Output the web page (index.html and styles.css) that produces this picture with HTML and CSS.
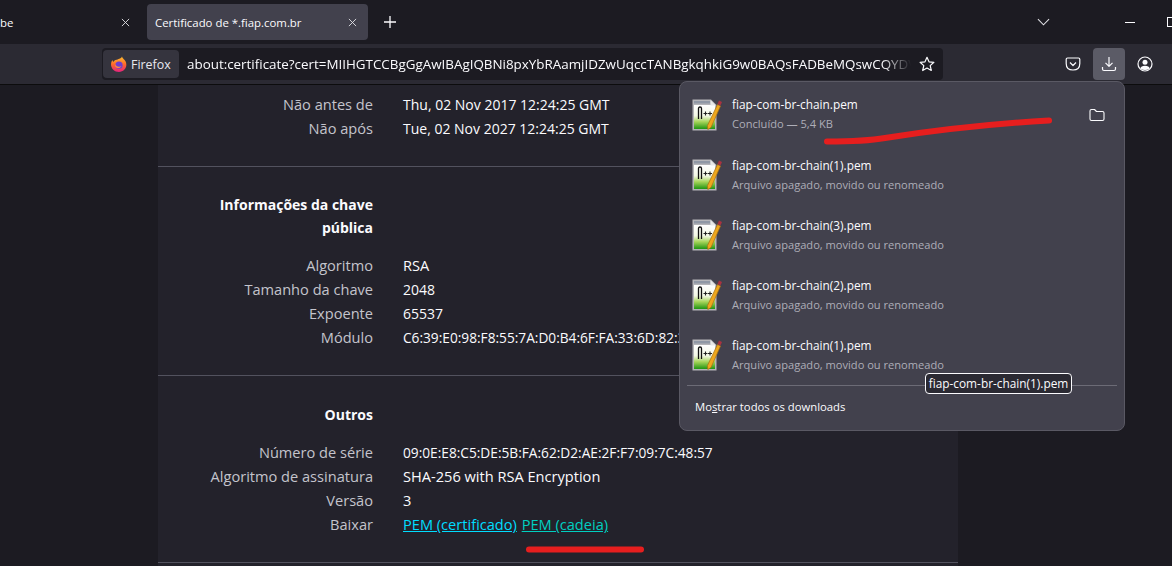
FILE: index.html
```html
<!DOCTYPE html>
<html lang="pt-BR">
<head>
<meta charset="utf-8">
<title>Certificado de *.fiap.com.br</title>
<link rel="stylesheet" href="styles.css">
</head>
<body>
<svg width="0" height="0" class="defs">
  <defs>
    <linearGradient id="paper" x1="0" y1="0" x2="0" y2="1">
      <stop offset="0" stop-color="#ffffff"/>
      <stop offset=".45" stop-color="#f3f8e6"/>
      <stop offset=".7" stop-color="#a6d45a"/>
      <stop offset="1" stop-color="#1f9412"/>
    </linearGradient>
    <linearGradient id="fxfire" x1="0" y1="0" x2="0" y2="1">
      <stop offset="0" stop-color="#ffc02e"/>
      <stop offset=".5" stop-color="#ff6a2b"/>
      <stop offset="1" stop-color="#e3217f"/>
    </linearGradient>
  </defs>
  <symbol id="notepad" viewBox="0 0 30 32">
    <path d="M.5 .5H19L24.500 6V31.500H.5Z" fill="#b4b4b8"/>
    <path d="M2 6H23V30H2Z" fill="url(#paper)"/>
    <path d="M2 2H18V4.500H2Z" fill="#8f97a5"/>
    <path d="M18.500 1L24 6.500H18.500Z" fill="#e8e8e8"/>
    <path d="M6.500 20V9.500Q6.500 8 8 8Q9.500 8 9.500 9.500V20" fill="none" stroke="#111" stroke-width="1.300"/>
    <path d="M11.500 14.500H15.500M13.500 12.500V16.500M16 14.500H20M18 12.500V16.500" stroke="#222" stroke-width="1.100"/>
    <path d="M15.500 26.500L25.500 5.500L28.500 7L19 28.500L15.800 30.500Z" fill="#eea71e" stroke="#a86f10" stroke-width=".7"/>
    <path d="M25.500 5L27 1.500L30 3L28.500 6.500Z" fill="#a83240"/>
  </symbol>
</svg>
<header class="tabbar">
  <div class="tab tab-off"><span class="tab-label">be</span><svg class="ico-x" viewBox="0 0 10 10"><path d="M1 1L9 9M9 1L1 9"/></svg></div>
  <div class="tab tab-on"><span class="tab-label">Certificado de *.fiap.com.br</span><svg class="ico-x" viewBox="0 0 10 10"><path d="M1 1L9 9M9 1L1 9"/></svg></div>
  <svg class="ico-plus" viewBox="0 0 12 12"><path d="M6 0V12M0 6H12"/></svg>
  <div class="tab-spacer"></div>
  <svg class="ico-chev" viewBox="0 0 14 8"><path d="M1 1L7 7L13 1"/></svg>
  <div class="win-min"></div>
  <div class="win-max"></div>
</header>
<nav class="toolbar">
  <div class="urlbar">
    <div class="chip">
      <svg class="ico-fx" viewBox="0 0 16 16">
        <path d="M11 .5C11.500 3 14 3 15 6.500C16.500 11.500 13 16 8 16C3.500 16 0 12.500 0 8.500C0 6.500 .8 4.800 1.500 4C1.500 5 2 5.500 2.500 6C3 4.500 4.500 3.500 6 3.800C8 2.500 10.500 2.500 11 .5Z" fill="url(#fxfire)"/>
        <circle cx="8" cy="9.200" r="3.600" fill="#6e3fd0"/>
        <path d="M4.300 8C5 10.500 8 11.500 10.500 10C9.500 12.500 5 13 4 10Z" fill="#ff8a3c"/>
      </svg>
      <span>Firefox</span>
    </div>
    <div class="url">about:certificate?cert=MIIHGTCCBgGgAwIBAgIQBNi8pxYbRAamjIDZwUqccTANBgkqhkiG9w0BAQsFADBeMQswCQYDV</div>
    <svg class="ico-star" viewBox="0 0 16 16"><path d="M8 1.300L10 5.800L14.900 6.300L11.200 9.600L12.300 14.500L8 12L3.700 14.500L4.800 9.600L1.100 6.300L6 5.800Z"/></svg>
  </div>
  <div class="tools">
    <button class="tool"><svg viewBox="0 0 16 16"><path d="M2.500 2H13.500Q14.800 2 14.800 3.300V7.500Q14.800 14 8 14Q1.200 14 1.200 7.500V3.300Q1.200 2 2.500 2Z"/><path d="M5 6.500L8 9.500L11 6.500"/></svg></button>
    <button class="tool tool-on"><svg viewBox="0 0 16 16"><path d="M8 1V10M4.500 6.800L8 10.300L11.500 6.800"/><path d="M1.500 11V13Q1.500 14.500 3 14.500H13Q14.500 14.500 14.500 13V11"/></svg></button>
    <button class="tool"><svg viewBox="0 0 16 16"><circle cx="8" cy="8" r="7"/><circle class="solid" cx="8" cy="6.200" r="2.500"/><path class="solid" d="M3.300 12.500Q4 9.800 8 9.800Q12 9.800 12.700 12.500Q8 15.500 3.300 12.500Z"/></svg></button>
  </div>
</nav>
<main class="page">
  <div class="card">
    <section class="group group-first">
      <div class="row"><span class="key">Não antes de</span><span class="val val-num">Thu, 02 Nov 2017 12:24:25 GMT</span></div>
      <div class="row"><span class="key">Não após</span><span class="val val-num">Tue, 02 Nov 2027 12:24:25 GMT</span></div>
    </section>
    <section class="group group-key">
      <h2 class="heading">Informações da chave pública</h2>
      <div class="row"><span class="key">Algoritmo</span><span class="val">RSA</span></div>
      <div class="row"><span class="key">Tamanho da chave</span><span class="val val-num">2048</span></div>
      <div class="row"><span class="key">Expoente</span><span class="val val-num">65537</span></div>
      <div class="row"><span class="key">Módulo</span><span class="val val-hex">C6:39:E0:98:F8:55:7A:D0:B4:6F:FA:33:6D:82:38:1C</span></div>
    </section>
    <section class="group group-misc">
      <h2 class="heading">Outros</h2>
      <div class="row"><span class="key">Número de série</span><span class="val val-hex">09:0E:E8:C5:DE:5B:FA:62:D2:AE:2F:F7:09:7C:48:57</span></div>
      <div class="row"><span class="key">Algoritmo de assinatura</span><span class="val">SHA-256 with RSA Encryption</span></div>
      <div class="row"><span class="key">Versão</span><span class="val">3</span></div>
      <div class="row"><span class="key">Baixar</span><span class="val"><a class="link" href="#">PEM (certificado)</a> <a class="link link-b" href="#">PEM (cadeia)</a></span></div>
    </section>
  </div>
</main>
<aside class="panel">
  <ul class="dl-list">
    <li class="dl dl-first">
      <svg class="ico-note"><use href="#notepad"/></svg>
      <div class="dl-text"><div class="dl-name">fiap-com-br-chain.pem</div><div class="dl-status">Concluído — 5,4 KB</div></div>
      <svg class="ico-folder" viewBox="0 0 16 16"><path d="M1 4Q1 2.500 2.500 2.500H5.500L7.500 4.500H13.500Q15 4.500 15 6V12Q15 13.500 13.500 13.500H2.500Q1 13.500 1 12Z"/></svg>
    </li>
    <li class="dl">
      <svg class="ico-note"><use href="#notepad"/></svg>
      <div class="dl-text"><div class="dl-name">fiap-com-br-chain(1).pem</div><div class="dl-status">Arquivo apagado, movido ou renomeado</div></div>
    </li>
    <li class="dl">
      <svg class="ico-note"><use href="#notepad"/></svg>
      <div class="dl-text"><div class="dl-name">fiap-com-br-chain(3).pem</div><div class="dl-status">Arquivo apagado, movido ou renomeado</div></div>
    </li>
    <li class="dl">
      <svg class="ico-note"><use href="#notepad"/></svg>
      <div class="dl-text"><div class="dl-name">fiap-com-br-chain(2).pem</div><div class="dl-status">Arquivo apagado, movido ou renomeado</div></div>
    </li>
    <li class="dl">
      <svg class="ico-note"><use href="#notepad"/></svg>
      <div class="dl-text"><div class="dl-name">fiap-com-br-chain(1).pem</div><div class="dl-status">Arquivo apagado, movido ou renomeado</div></div>
    </li>
  </ul>
  <div class="panel-sep"></div>
  <div class="panel-foot">Mo<u>s</u>trar todos os downloads</div>
</aside>
<div class="tooltip">fiap-com-br-chain(1).pem</div>
<svg class="ink" viewBox="0 0 1172 566">
  <path d="M827 141.500C850 141.500 868 141 885 138C930 131 990 124 1049 120.500"/>
  <path d="M529 549.500H641"/>
</svg>
</body>
</html>
```
FILE: styles.css
```css
* { box-sizing: border-box; }
html, body { margin: 0; height: 100%; overflow: hidden; }
body {
  background: #1c1b22;
  color: #fbfbfe;
  font-family: "Open Sans", "Noto Sans", sans-serif;
  font-size: 14.6px;
  display: flex;
  flex-direction: column;
  position: relative;
}
.defs { position: absolute; }
svg { display: block; flex: none; }

.tabbar {
  height: 44px;
  display: flex;
  align-items: center;
  background: #1c1b22;
  flex: none;
  overflow: hidden;
}
.tab {
  height: 36px;
  border-radius: 4px;
  display: flex;
  align-items: center;
  font-size: 11.4px;
}
.tab-off { width: 135px; padding-right: 2px; margin-right: 12px; }
.tab-off .tab-label { flex: 1; }
.tab-on { width: 221px; background: #42414d; padding: 0 8px; }
.tab-on .tab-label { flex: 1; }
.ico-x { width: 9px; height: 9px; margin-right: 3px; }
.ico-x path { stroke: #e3e3e8; stroke-width: 1; fill: none; }
.ico-plus { width: 12px; height: 12px; margin-left: 16px; }
.ico-plus path { stroke: #fbfbfe; stroke-width: 1.300; fill: none; }
.tab-spacer { flex: 1; }
.ico-chev { width: 13px; height: 8px; margin-right: 75px; }
.ico-chev path { stroke: #e3e3e8; stroke-width: 1.100; fill: none; }
.win-min { width: 10px; height: 1px; background: #fbfbfe; margin-right: 32px; }
.win-max { width: 10px; height: 10px; border: 1px solid #fbfbfe; margin-right: -5px; }

.toolbar {
  height: 41px;
  background: #2b2a33;
  border-bottom: 1px solid #0c0c0d;
  flex: none;
  display: flex;
  align-items: flex-start;
  padding: 4px 0 0 102px;
}
.urlbar {
  width: 841px;
  height: 32px;
  background: #1c1b22;
  border-radius: 4px;
  display: flex;
  align-items: center;
  padding-left: 1px;
}
.chip {
  width: 76px;
  height: 28px;
  background: #35343e;
  border-radius: 4px;
  display: flex;
  align-items: center;
  gap: 4px;
  padding-left: 8px;
  font-size: 12.4px;
  color: #e8e8ee;
}
.ico-fx { width: 16px; height: 16px; }
.url {
  flex: 1;
  margin-left: 8px;
  white-space: nowrap;
  overflow: hidden;
  font-size: 13.4px;
  -webkit-mask-image: linear-gradient(to right, #000 96%, transparent 100%);
  mask-image: linear-gradient(to right, #000 96%, transparent 100%);
}
.ico-star { width: 16px; height: 16px; margin: 0 8px; }
.ico-star path { fill: none; stroke: #fbfbfe; stroke-width: 1.200; stroke-linejoin: round; }
.tools { display: flex; margin-left: 114px; }
.tool {
  width: 32px;
  height: 32px;
  padding: 8px;
  border: 0;
  border-radius: 4px;
  background: transparent;
}
.tool + .tool { margin-left: 4px; }
.tool-on { background: #5b5b66; }
.tool svg { width: 16px; height: 16px; }
.tool path, .tool circle { fill: none; stroke: #fbfbfe; stroke-width: 1.200; stroke-linejoin: round; }
.tool .solid { fill: #fbfbfe; stroke: none; }

.page { flex: 1; min-height: 0; overflow: hidden; }
.card {
  width: 800px;
  margin-left: 158px;
  background: #23222b;
  min-height: 100%;
}
.group { border-bottom: 1px solid #52525e; }
.group-first { height: 82px; padding-top: 8px; }
.group-key { height: 209px; padding-top: 26px; }
.group-misc { height: 187px; padding-top: 27px; }
.row {
  display: grid;
  grid-template-columns: 215px 1fr;
  column-gap: 30px;
  height: 24px;
  white-space: nowrap;
}
.key { text-align: right; color: #c4c4cc; line-height: 23px; }
.val { color: #fbfbfe; line-height: 23px; }
.val-num { font-size: 14px; line-height: 24px; }
.val-hex { font-size: 13.7px; line-height: 24px; }
.heading {
  width: 215px;
  margin: 0 0 15px;
  font-size: 14px;
  font-weight: 700;
  text-align: right;
  line-height: 23px;
  padding-left: 40px;
}
.link { color: #00ddff; }
.link-b { color: #00cfc0; margin-left: 1px; }

.panel {
  position: absolute;
  left: 679px;
  top: 81px;
  width: 446px;
  height: 350px;
  background: #42414d;
  border: 1px solid #5a5964;
  border-radius: 8px;
  padding-top: 3px;
  display: flex;
  flex-direction: column;
}
.dl-list { list-style: none; margin: 0; padding: 0; }
.dl {
  height: 60px;
  display: flex;
  align-items: center;
  padding: 0 19px 0 12px;
  gap: 10px;
}
.dl-first .dl-text { padding-bottom: 2px; }
.ico-note { width: 30px; height: 32px; }
.dl-text { flex: 1; }
.dl-name { font-size: 11.85px; line-height: 15px; color: #fbfbfe; }
.dl-status { font-size: 11.1px; line-height: 16px; margin-top: 4px; color: #aeaeb8; }
.ico-folder { width: 16px; height: 16px; }
.ico-folder path { fill: none; stroke: #fbfbfe; stroke-width: 1.100; stroke-linejoin: round; }
.panel-sep { height: 1px; background: #6c6b76; margin: 0 7px; }
.panel-foot { font-size: 11.3px; padding: 13px 15px; line-height: 16px; color: #fbfbfe; }

.tooltip {
  position: absolute;
  left: 925px;
  top: 373px;
  width: 147px;
  height: 21px;
  background: #2b2a33;
  border: 1px solid #fbfbfe;
  border-radius: 4px;
  font-size: 11.85px;
  line-height: 19px;
  text-align: center;
  white-space: nowrap;
}
.ink {
  position: absolute;
  left: 0;
  top: 0;
  width: 1172px;
  height: 566px;
  pointer-events: none;
}
.ink path { fill: none; stroke: #e61e1e; stroke-width: 6; stroke-linecap: round; }
```
